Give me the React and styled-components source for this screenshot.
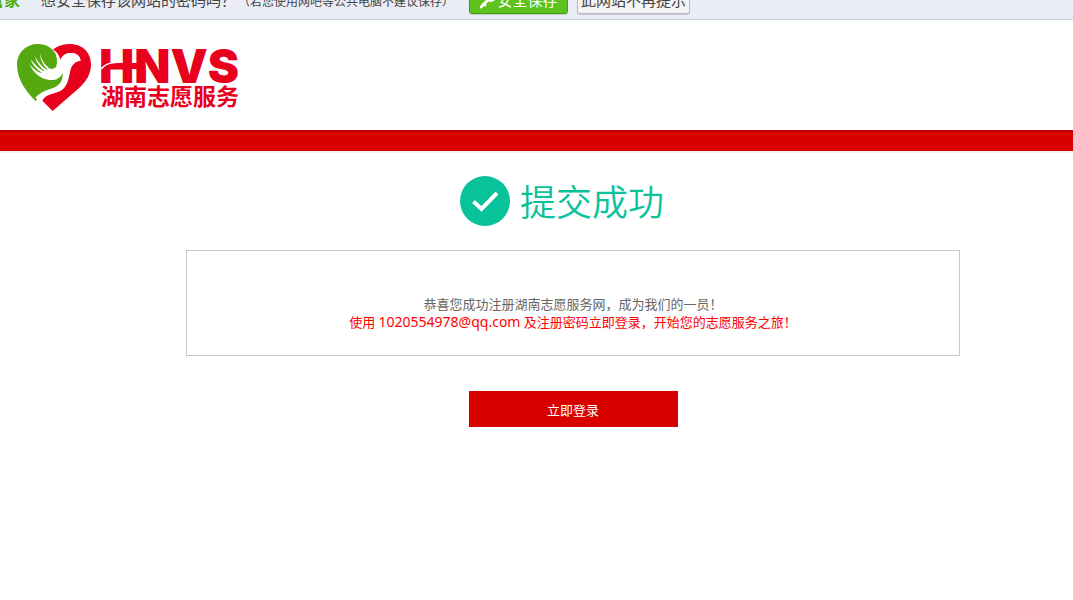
import styled, { createGlobalStyle } from 'styled-components';

const App = () => {
    return (
        <>
            <GlobalStyle />
            <PasswordBar>
                <Brand>管家</Brand>
                <Question>想安全保存该网站的密码吗？</Question>
                <Hint>（若您使用网吧等公共电脑不建议保存）</Hint>
                <SaveButton type="button">
                    <KeyIcon />
                    安全保存
                </SaveButton>
                <DismissButton type="button">此网站不再提示</DismissButton>
            </PasswordBar>

            <Header>
                <Logo />
            </Header>
            <RedBand />

            <Main>
                <Title>
                    <CheckIcon />
                    提交成功
                </Title>
                <MessageBox>
                    <Message>恭喜您成功注册湖南志愿服务网，成为我们的一员！</Message>
                    <Message $highlight>
                        使用 <Account>1020554978@qq.com</Account> 及注册密码立即登录，开始您的志愿服务之旅！
                    </Message>
                </MessageBox>
                <LoginButton type="button">立即登录</LoginButton>
            </Main>
        </>
    )
}

export default App

const KeyIcon = () => (
    <svg width="16" height="18" viewBox="0 0 16 18" aria-hidden="true">
        <path d="M1 16 L9 8" stroke="#fff" strokeWidth="3" strokeLinecap="round" />
        <path d="M3 12 L6 15" stroke="#fff" strokeWidth="2" />
        <circle cx="11" cy="6" r="3" fill="none" stroke="#fff" strokeWidth="4" />
    </svg>
)

const CheckIcon = () => (
    <svg width="50" height="50" viewBox="0 0 50 50" aria-hidden="true">
        <circle cx="25" cy="25" r="25" fill="#08c299" />
        <path d="M13.5 25.5 L21.5 33 L37 17" fill="none" stroke="#fff" strokeWidth="4" />
    </svg>
)

const Logo = () => (
    <LogoLink href="#" aria-label="湖南志愿服务">
        <svg width="74" height="67" viewBox="9 12 222 201" aria-hidden="true">
            <path
                fill="#55a80f"
                d="M66 184 C40 160 9 120 9 76 C9 36 38 12 72 12 C96 12 116 24 125 42 C131 58 130 74 124 88 L150 96 C152 130 130 142 110 147 C90 153 74 165 66 184 Z"
            />
            <path
                fill="#e8001c"
                d="M117 28 C132 17 150 12 168 12 C206 12 231 38 231 74 C231 110 207 135 178 159 L116 213 L85 182 C96 160 122 164 144 150 C168 132 164 94 174 78 C180 68 190 63 200 62 C198 48 188 39 172 39 C156 39 146 46 139 60 C136 46 129 36 117 28 Z"
            />
            <path
                fill="#fff"
                d="M78 41 C84 62 94 76 108 86 C120 89 131 81 136 67 C142 49 152 39 171 39 C187 39 197 48 200 61 C187 61 176 66 171 78 C164 98 166 126 148 143 C126 160 100 152 78 184 L64 174 C74 160 90 153 110 147 C134 140 146 126 147 98 C139 115 124 122 106 120 C78 117 56 96 46 73 C56 85 66 93 78 98 L84 99 C69 89 55 75 50 58 C61 73 74 85 88 93 L92 93 C78 81 66 66 63 50 C73 67 84 80 98 89 L101 88 C88 76 79 59 78 41 Z"
            />
        </svg>
        <svg width="140" height="67" viewBox="0 0 140 67" aria-hidden="true">
            <WordMark x="-2" y="39">HNVS</WordMark>
            <path d="M26 19 H40 V25 H26 Z" fill="#e8001c" />
            <path d="M0 25 C4 20 9 18 22 18" fill="none" stroke="#fff" strokeWidth="1.5" />
            <SiteName x="0" y="61">湖南志愿服务</SiteName>
        </svg>
    </LogoLink>
)

const GlobalStyle = createGlobalStyle`
  * {
    box-sizing: border-box;
  }

  body {
    margin: 0;
    background: #fff;
    color: #666;
    font-family: "Noto Sans", "Noto Sans CJK SC", sans-serif;
    font-size: 13px;
  }

  button {
    font-family: inherit;
    cursor: pointer;
  }
`;

// Browser bar, only its lower edge is in view
const PasswordBar = styled.div`
  display: flex;
  align-items: flex-end;
  height: 20px;
  padding-bottom: 5px;
  overflow: hidden;
  white-space: nowrap;
  background: #eaedf6;
  border-bottom: 1px solid #ccd2e6;
  color: #444;
`;

const Brand = styled.strong`
  width: 41px;
  margin-left: -12px;
  margin-right: 12px;
  color: #4cb012;
  font-size: 16px;
  line-height: 28px;
`;

const Question = styled.span`
  margin-right: 2px;
  font-size: 15px;
  line-height: 28px;
`;

const Hint = styled.span`
  width: 231px;
  font-size: 12px;
  line-height: 24px;
`;

const BarButton = styled.button`
  display: flex;
  flex-shrink: 0;
  align-items: center;
  justify-content: center;
  height: 28px;
  padding: 0;
  border-radius: 3px;
  font-size: 15px;
  line-height: 24px;
  box-shadow: 0 1px 1px #c4c8d0;
`;

const SaveButton = styled(BarButton)`
  gap: 2px;
  width: 99px;
  background: #5dc21e;
  border: 1px solid #43a012;
  color: #fff;
`;

const DismissButton = styled(BarButton)`
  width: 113px;
  margin-left: 9px;
  background: #f4f4f4;
  border: 1px solid #b8bbc0;
  color: #444;
`;

const Header = styled.header`
  padding: 24px 17px 19px;
`;

const LogoLink = styled.a`
  display: flex;
  gap: 10px;
  width: fit-content;
`;

const WordMark = styled.text`
  fill: #e8001c;
  font-family: Inter, sans-serif;
  font-size: 47px;
  font-weight: 900;
`;

const SiteName = styled.text`
  fill: #e8001c;
  font-family: "Noto Sans CJK SC", sans-serif;
  font-size: 23px;
  font-weight: 700;
`;

const RedBand = styled.div`
  height: 21px;
  background: #d90000;
  border-top: 2px solid #c00000;
  box-shadow: 0 2px 0 #f0f0f0;
`;

const Main = styled.main`
  display: flex;
  flex-direction: column;
  align-items: center;
  padding: 25px 0 40px 73px;
`;

const Title = styled.h1`
  display: flex;
  align-items: flex-start;
  gap: 10px;
  margin: 0 22px 21px 0;
  color: #08c299;
  font-size: 36px;
  font-weight: 350;
  line-height: 53px;
`;

const MessageBox = styled.section`
  width: 100%;
  max-width: 774px;
  padding: 44px 20px 24px;
  border: 1px solid #c8c8c8;
  text-align: center;
`;

const Message = styled.p`
  margin: 0;
  color: ${({ $highlight }) => ($highlight ? '#f00' : '#666')};
  line-height: 18px;
`;

const Account = styled.span`
  font-size: 14px;
`;

const LoginButton = styled.button`
  width: 209px;
  height: 36px;
  margin-top: 35px;
  background: #d90000;
  border: 0;
  color: #fff;
  font-size: 13px;
`;
